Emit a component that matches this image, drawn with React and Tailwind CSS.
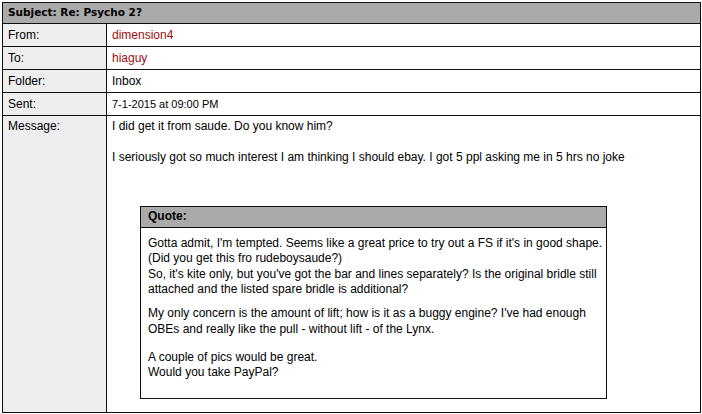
import React from "react";

const rows = [
  { label: "From:", value: "dimension4", red: true },
  { label: "To:", value: "hiaguy", red: true },
  { label: "Folder:", value: "Inbox" },
  { label: "Sent:", value: "7-1-2015 at 09:00 PM", small: true },
];

export default function App() {
  return (
    <div className="w-[702px] h-[414px] bg-white pt-[2px] pl-[2px]" style={{ fontFamily: '"Liberation Sans", Arial, sans-serif' }}>
      <div className="w-[699px] h-[411px] border border-[#111] flex flex-col text-[12px] text-black">
        <div className="h-[21px] shrink-0 bg-[#aaaaaa] border-b border-[#111] flex items-center pl-[5px] text-[10.5px] font-bold" style={{ fontFamily: '"DejaVu Sans", Verdana, sans-serif' }}>
          Subject: Re: Psycho 2?
        </div>
        {rows.map((r) => (
          <div key={r.label} className="h-[23px] shrink-0 border-b border-[#111] flex">
            <div className="w-[104px] shrink-0 bg-[#eeeeee] border-r border-[#111] flex items-center pl-[5px]">{r.label}</div>
            <div className={`flex items-center pl-[5px] ${r.red ? "text-[#a00c0c]" : ""} ${r.small ? "text-[11px]" : ""}`}>{r.value}</div>
          </div>
        ))}
        <div className="flex flex-1">
          <div className="w-[104px] shrink-0 bg-[#eeeeee] border-r border-[#111] pl-[5px] pt-[3px] leading-[15.5px]">Message:</div>
          <div className="flex-1 pl-[5px] pt-[3px] leading-[15.5px]">
            <div>I did get it from saude. Do you know him?</div>
            <div className="mt-[15.5px]">I seriously got so much interest I am thinking I should ebay. I got 5 ppl asking me in 5 hrs no joke</div>
            <div className="mt-[40px] ml-[28px] w-[467px] h-[193px] border border-[#111] flex flex-col">
              <div className="h-[21px] shrink-0 bg-[#aaaaaa] border-b border-[#111] flex items-center pl-[7px] font-bold">Quote:</div>
              <div className="pl-[7px] pr-[2px] pt-[8px] leading-[15.5px]">
                <div>Gotta admit, I'm tempted. Seems like a great price to try out a FS if it's in good shape.</div>
                <div>(Did you get this fro rudeboysaude?)</div>
                <div>So, it's kite only, but you've got the bar and lines separately? Is the original bridle still attached and the listed spare bridle is additional?</div>
                <div className="mt-[8.5px] pr-[8px]">My only concern is the amount of lift; how is it as a buggy engine? I've had enough OBEs and really like the pull - without lift - of the Lynx.</div>
                <div className="mt-[12.5px]">A couple of pics would be great.</div>
                <div>Would you take PayPal?</div>
              </div>
            </div>
          </div>
        </div>
      </div>
    </div>
  );
}
